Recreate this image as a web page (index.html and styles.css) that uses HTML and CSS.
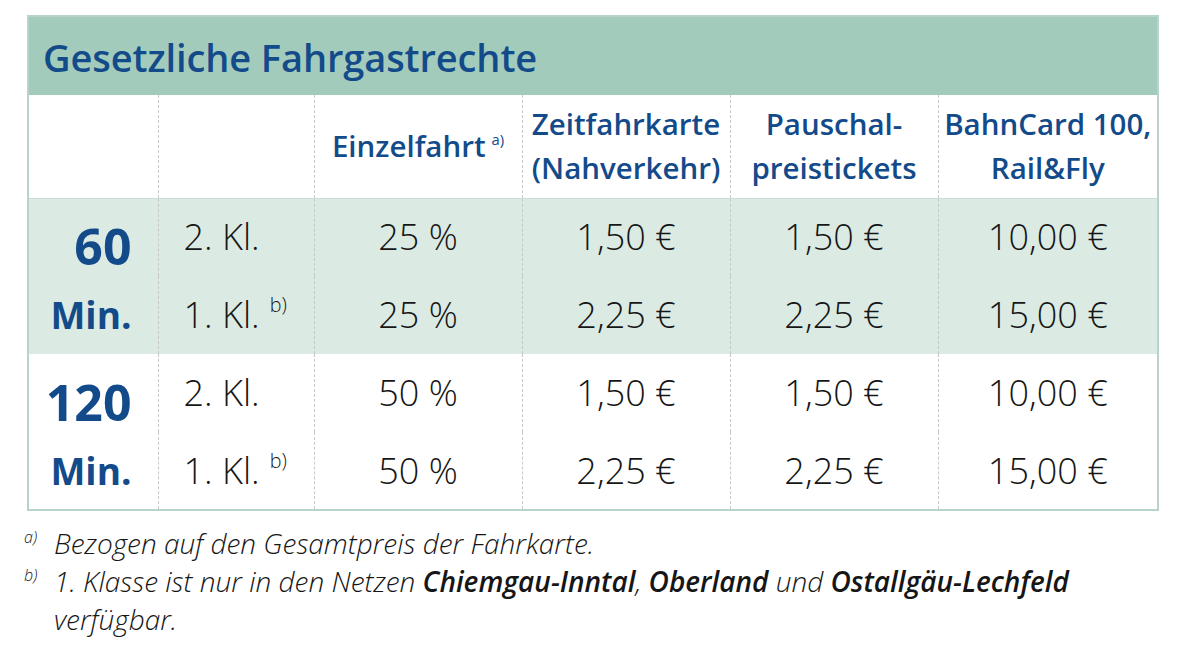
FILE: index.html
```html
<!DOCTYPE html>
<html lang="de">
<head>
<meta charset="utf-8">
<title>Gesetzliche Fahrgastrechte</title>
<link rel="stylesheet" href="styles.css">
</head>
<body>
<div class="page">
  <table class="rights">
    <colgroup>
      <col class="c1"><col class="c2"><col class="c3"><col class="c4"><col class="c5"><col class="c6">
    </colgroup>
    <thead>
      <tr class="caption-row">
        <th colspan="6" class="caption">Gesetzliche Fahrgastrechte</th>
      </tr>
      <tr class="head-row">
        <th></th>
        <th></th>
        <th>Einzelfahrt<sup class="fn">a)</sup></th>
        <th>Zeitfahrkarte<br>(Nahverkehr)</th>
        <th>Pauschal-<br>preistickets</th>
        <th>BahnCard 100,<br>Rail&amp;Fly</th>
      </tr>
    </thead>
    <tbody class="grp tinted">
      <tr>
        <td class="mins big">60</td>
        <td class="cls">2. Kl.</td>
        <td>25 %</td>
        <td>1,50 €</td>
        <td>1,50 €</td>
        <td>10,00 €</td>
      </tr>
      <tr>
        <td class="mins">Min.</td>
        <td class="cls">1. Kl.<sup class="fn">b)</sup></td>
        <td>25 %</td>
        <td>2,25 €</td>
        <td>2,25 €</td>
        <td>15,00 €</td>
      </tr>
    </tbody>
    <tbody class="grp">
      <tr>
        <td class="mins big">120</td>
        <td class="cls">2. Kl.</td>
        <td>50 %</td>
        <td>1,50 €</td>
        <td>1,50 €</td>
        <td>10,00 €</td>
      </tr>
      <tr>
        <td class="mins">Min.</td>
        <td class="cls">1. Kl.<sup class="fn">b)</sup></td>
        <td>50 %</td>
        <td>2,25 €</td>
        <td>2,25 €</td>
        <td>15,00 €</td>
      </tr>
    </tbody>
  </table>

  <div class="notes">
    <span class="mark">a)</span>
    <p>Bezogen auf den Gesamtpreis der Fahrkarte.</p>
    <span class="mark">b)</span>
    <p>1. Klasse ist nur in den Netzen <b>Chiemgau-Inntal</b>, <b>Oberland</b> und <b>Ostallgäu-Lechfeld</b> verfügbar.</p>
  </div>
</div>
</body>
</html>
```

FILE: styles.css
```css
* { box-sizing: border-box; }

html, body {
  margin: 0;
  padding: 0;
  background: #ffffff;
}

body {
  font-family: "Open Sans", "Noto Sans", sans-serif;
  color: #161616;
}

.page {
  padding: 15px 0 0 27px;
}

.rights {
  width: 1130px;
  border-collapse: collapse;
  table-layout: fixed;
  border: 2px solid #b8d4ca;
}

.c1 { width: 130px; }
.c2 { width: 156px; }
.c3 { width: 208px; }
.c4 { width: 208px; }
.c5 { width: 208px; }
.c6 { width: 220px; }

.caption {
  height: 79px;
  background: #a3cbbc;
  color: #134a8a;
  font-size: 38px;
  font-weight: 600;
  line-height: 48px;
  text-align: left;
  padding: 2px 0 0 14px;
  letter-spacing: -0.1px;
}

.head-row th {
  height: 103px;
  color: #134a8a;
  font-size: 29.5px;
  font-weight: 600;
  line-height: 44px;
  text-align: center;
  padding: 0;
  border-left: 1px dashed #c8c8c8;
  border-bottom: 1px solid #c9ddd5;
}

.head-row th:first-child { border-left: none; }

.fn {
  font-size: 0.5em;
  font-weight: 400;
  vertical-align: 0.8em;
  line-height: 0;
  margin-left: 6px;
}

.grp td {
  height: 78px;
  font-size: 36px;
  font-weight: 300;
  line-height: 44px;
  text-align: center;
  padding: 0;
  border-left: 1px dashed #c8c8c8;
}

.grp td:first-child { border-left: none; }

.tinted td { background: #dbebe4; }

.grp td.mins {
  text-align: right;
  padding-right: 26px;
  color: #134a8a;
  font-weight: 700;
  font-size: 37px;
}

.grp td.mins.big {
  font-size: 50px;
  line-height: 54px;
  padding-top: 18px;
}

.grp td.cls {
  text-align: left;
  padding-left: 25px;
}

.cls .fn {
  font-size: 0.55em;
  font-weight: 300;
  margin-left: 10px;
}

.notes {
  display: grid;
  grid-template-columns: 30px 1fr;
  margin-top: 13px;
  margin-left: -3px;
  width: 1130px;
  font-style: italic;
  font-weight: 300;
  font-size: 28px;
  line-height: 38px;
  color: #161616;
}

.notes p { margin: 0; }

.notes b { font-weight: 600; }

.mark {
  font-size: 16px;
  line-height: 26px;
}
```
